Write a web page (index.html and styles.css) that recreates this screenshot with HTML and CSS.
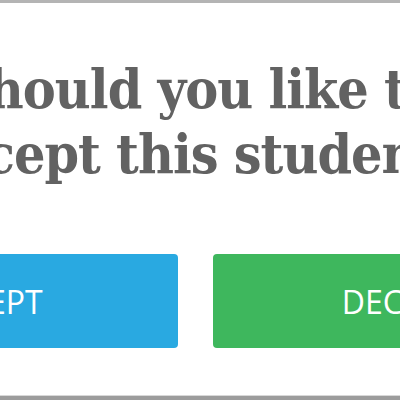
FILE: index.html
```html
<!DOCTYPE html>
<html lang="en">
<head>
<meta charset="utf-8">
<title>Accept student</title>
<link rel="stylesheet" href="styles.css">
</head>
<body>
<div class="viewport">
  <div class="modal">
    <h1 class="question">Should you like to<br>accept this student?</h1>
    <div class="actions">
      <button class="btn btn-accept">ACCEPT</button>
      <button class="btn btn-decline">DECLINE</button>
    </div>
  </div>
</div>
</body>
</html>
```
FILE: styles.css
```css
html, body {
  margin: 0;
  padding: 0;
  background: #ffffff;
}
.viewport {
  width: 400px;
  height: 400px;
  overflow: hidden;
}
.modal {
  box-sizing: border-box;
  width: 807px;
  height: 400px;
  margin-left: -208px;
  background: #ffffff;
  border-top: 3px solid #b4b4b4;
  border-bottom: 4px solid #9c9c9c;
  box-shadow: inset 0 -5px 0 -4px #d8d8d8;
  display: flex;
  flex-direction: column;
  align-items: stretch;
}
.question {
  margin: 53px 0 0 0;
  font-family: "DejaVu Serif Condensed", "DejaVu Serif", serif;
  font-stretch: condensed;
  font-weight: bold;
  font-size: 55px;
  line-height: 65px;
  letter-spacing: -1px;
  color: #626262;
  text-align: center;
}
.actions {
  display: flex;
  gap: 35px;
  margin-top: 68px;
}
.btn {
  flex: 1;
  height: 94px;
  border: none;
  border-radius: 4px;
  color: #ffffff;
  font-family: "Open Sans", sans-serif;
  font-size: 32px;
  font-weight: 400;
  padding: 0;
}
.btn-accept {
  background: #29a9e1;
}
.btn-decline {
  background: #3eb75d;
}
```
